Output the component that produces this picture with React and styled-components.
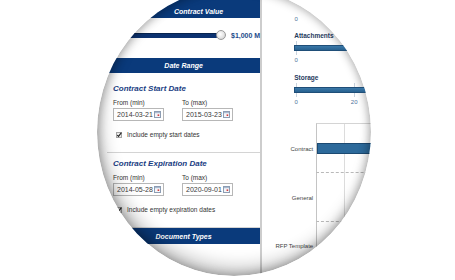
import React from "react";
import styled, { createGlobalStyle } from "styled-components";

const GlobalStyle = createGlobalStyle`
	html, body {
		margin: 0;
		padding: 0;
		background: #fff;
	}
	body {
		font-family: "Liberation Sans", Arial, sans-serif;
		overflow: hidden;
	}
`;

const Stage = styled.div`
	width: 455px;
	height: 280px;
	overflow: hidden;
	background: #fff;
`;

const Lens = styled.div`
	position: relative;
	width: 274px;
	height: 288px;
	margin: -12px 0 0 97px;
	border-radius: 50%;
	overflow: hidden;
	background: #fff;
`;

const Shade = styled.div`
	position: absolute;
	inset: 0;
	border-radius: 50%;
	pointer-events: none;
	box-shadow: inset 0 0 10px 1px rgba(0, 0, 0, 0.32),
		inset 5px -10px 16px rgba(0, 0, 0, 0.2);
`;

const Screen = styled.div`
	display: flex;
	width: 455px;
	height: 300px;
	margin: 12px 0 0 -97px;
`;

/* left filter column */

const Sidebar = styled.aside`
	flex: 0 0 150px;
	margin-left: 107px;
	border-right: 2px solid #cdcdcd;
	display: flex;
	flex-direction: column;
`;

const BarHeader = styled.div`
	height: ${(p) => p.$h || 15}px;
	padding-top: ${(p) => p.$top || 0}px;
	padding-left: ${(p) => p.$shift || 0}px;
	background: #0a3a7b;
	color: #fff;
	font-size: 7px;
	font-weight: bold;
	font-style: italic;
	display: flex;
	align-items: center;
	justify-content: center;
	white-space: nowrap;
`;

const SliderRow = styled.div`
	height: 34px;
	padding-bottom: 6px;
	display: flex;
	align-items: center;
`;

const Track = styled.div`
	flex: 0 0 111px;
	height: 4px;
	background: #0c3270;
	border-top: 1px solid #08244f;
	border-radius: 0 2px 2px 0;
`;

const Handle = styled.div`
	flex: 0 0 auto;
	width: 8px;
	height: 8px;
	margin-left: -2px;
	border-radius: 50%;
	border: 1px solid #9a9a9a;
	background: radial-gradient(circle at 40% 40%, #fff 0, #e4e4e4 55%, #bdbdbd 100%);
`;

const Price = styled.span`
	flex: 0 0 auto;
	margin-left: 5px;
	font-size: 7px;
	font-weight: bold;
	color: #1c4a8a;
	white-space: nowrap;
`;

const Section = styled.section`
	padding: ${(p) => p.$top}px 0 13px 6px;
	border-bottom: 1px solid #d4d4d4;
`;

const SectionTitle = styled.div`
	font-size: 8px;
	line-height: 10px;
	font-weight: bold;
	font-style: italic;
	color: #1a3d82;
	margin-bottom: 5px;
	white-space: nowrap;
`;

const Fields = styled.div`
	display: grid;
	grid-template-columns: 51px 51px;
	column-gap: 18px;
	row-gap: 1px;
`;

const FieldLabel = styled.span`
	font-size: 6.5px;
	line-height: 8px;
	color: #333;
	white-space: nowrap;
`;

const DateBox = styled.div`
	box-sizing: border-box;
	height: 13px;
	border: 1px solid #b7b7b7;
	background: #fff;
	display: flex;
	align-items: center;
	justify-content: space-between;
	padding: 0 2px 0 3px;
	font-size: 7px;
	color: #3a3a3a;
`;

const CheckRow = styled.label`
	margin-top: 10px;
	padding-left: 3px;
	display: flex;
	align-items: center;
	gap: 5px;
	font-size: 6.5px;
	line-height: 8px;
	color: #333;
	white-space: nowrap;
`;

const CalendarIcon = () => (
	<svg width="7" height="7" viewBox="0 0 7 7">
		<rect x="0.5" y="0.5" width="6" height="6" fill="#f4f6f9" stroke="#8d9db3" />
		<rect x="1" y="1" width="5" height="1.2" fill="#a9bad0" />
		<rect x="3.6" y="3.4" width="1.6" height="1.6" fill="#d23a3a" />
	</svg>
);

const CheckIcon = () => (
	<svg width="6" height="6" viewBox="0 0 6 6">
		<rect x="0.5" y="0.5" width="5" height="5" fill="#ececec" stroke="#a5a5a5" />
		<path d="M1.2 3 L2.5 4.4 L5.4 0.6" fill="none" stroke="#222" strokeWidth="1.1" />
	</svg>
);

const DateFilter = ({ title, from, to, empty, top }) => (
	<Section $top={top}>
		<SectionTitle>{title}</SectionTitle>
		<Fields>
			<FieldLabel>From (min)</FieldLabel>
			<FieldLabel>To (max)</FieldLabel>
			<DateBox>
				{from}
				<CalendarIcon />
			</DateBox>
			<DateBox>
				{to}
				<CalendarIcon />
			</DateBox>
		</Fields>
		<CheckRow>
			<CheckIcon />
			{empty}
		</CheckRow>
	</Section>
);

/* right chart column */

const Panel = styled.main`
	flex: 1;
	display: flex;
	flex-direction: column;
`;

const MiniBlock = styled.div`
	margin-top: ${(p) => p.$top}px;
	padding-left: 32px;
`;

const MiniTitle = styled.div`
	font-size: 6.5px;
	line-height: 8px;
	font-weight: bold;
	color: #1f3b5e;
	margin-bottom: 5px;
	white-space: nowrap;
`;

const Plot = styled.div`
	position: relative;
	height: 6px;
	margin-bottom: 5px;
`;

const MiniBar = styled.div`
	position: relative;
	z-index: 1;
	box-sizing: border-box;
	height: 6px;
	background: linear-gradient(#3a78a8, #28618f);
	border: 1px solid #1f4e78;
`;

const GridMark = styled.span`
	position: absolute;
	top: -4px;
	bottom: -4px;
	width: 1px;
	background: #c9d3dd;
`;

const AxisRow = styled.div`
	position: relative;
	height: 8px;
`;

const AxisLabel = styled.span`
	position: absolute;
	top: 0;
	transform: translateX(-50%);
	font-size: 6px;
	line-height: 8px;
	color: #4d7299;
`;

const SCALE = 2.9;

const Axis = ({ ticks }) => (
	<AxisRow>
		{ticks.map((t) => (
			<AxisLabel key={t} style={{ left: 2 + t * SCALE }}>
				{t}
			</AxisLabel>
		))}
	</AxisRow>
);

const MiniChart = ({ title, ticks, top }) => (
	<MiniBlock $top={top}>
		<MiniTitle>{title}</MiniTitle>
		<Plot>
			{ticks.map((t) => (
				<GridMark key={t} style={{ left: 2 + t * SCALE }} />
			))}
			<MiniBar style={{ width: 140 }} />
		</Plot>
		<Axis ticks={ticks} />
	</MiniBlock>
);

const TypeChart = styled.div`
	margin-top: 17px;
	display: flex;
	flex-direction: column;
`;

const TypeRow = styled.div`
	display: grid;
	grid-template-columns: 54px 1fr;
`;

const TypeLabel = styled.div`
	display: flex;
	align-items: center;
	justify-content: flex-end;
	padding-right: 3px;
	font-size: 6px;
	color: #444;
	white-space: nowrap;
	padding-top: ${(p) => (p.$first ? 1 : 0)}px;
`;

const TypeCell = styled.div`
	height: 48px;
	display: flex;
	align-items: center;
	border-left: 1px solid #c4c4c4;
	border-top: ${(p) => (p.$first ? "1px solid #d4d4d4" : "none")};
	border-bottom: ${(p) => (p.$last ? "none" : "1px dashed #b9b9b9")};
	background-image: linear-gradient(
		90deg,
		transparent 27px,
		#dcdcdc 27px,
		#dcdcdc 28px,
		transparent 28px
	);
	background-size: 28px 100%;
`;

const TypeBar = styled.div`
	box-sizing: border-box;
	height: 11px;
	background: #2d6a9b;
	border: 1px solid #1c4a72;
`;

const types = [
	{ name: "Contract", width: 200 },
	{ name: "General", width: 0 },
	{ name: "RFP Template", width: 0 },
];

export default function App() {
	return (
		<>
			<GlobalStyle />
			<Stage>
				<Lens>
					<Screen>
						<Sidebar>
							<BarHeader $h={13} $top={5} $shift={30}>
								Contract Value
							</BarHeader>
							<SliderRow>
								<Track />
								<Handle />
								<Price>$1,000 M</Price>
							</SliderRow>
							<BarHeader>Date Range</BarHeader>
							<DateFilter
								top={11}
								title="Contract Start Date"
								from="2014-03-21"
								to="2015-03-23"
								empty="Include empty start dates"
							/>
							<DateFilter
								top={6}
								title="Contract Expiration Date"
								from="2014-05-28"
								to="2020-09-01"
								empty="Include empty expiration dates"
							/>
							<BarHeader $h={16}>Document Types</BarHeader>
						</Sidebar>
						<Panel>
							<MiniBlock $top={15}>
								<Axis ticks={[0]} />
							</MiniBlock>
							<MiniChart top={9} title="Attachments" ticks={[0]} />
							<MiniChart top={10} title="Storage" ticks={[0, 20]} />
							<TypeChart>
								{types.map((t, i) => (
									<TypeRow key={t.name}>
										<TypeLabel $first={i === 0}>{t.name}</TypeLabel>
										<TypeCell $first={i === 0} $last={i === types.length - 1}>
											{t.width > 0 && <TypeBar style={{ width: t.width }} />}
										</TypeCell>
									</TypeRow>
								))}
							</TypeChart>
						</Panel>
					</Screen>
					<Shade />
				</Lens>
			</Stage>
		</>
	);
}
